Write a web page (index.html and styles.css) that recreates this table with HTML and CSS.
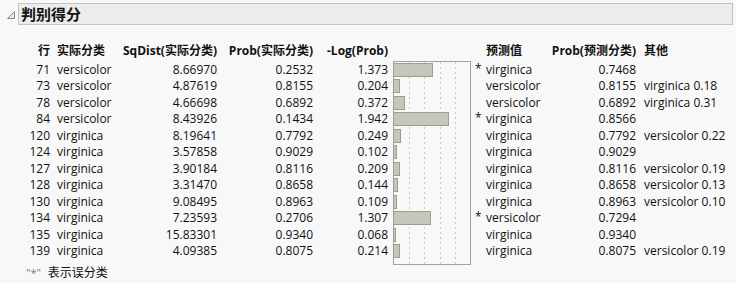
FILE: index.html
```html
<!DOCTYPE html>
<html lang="zh">
<head>
<meta charset="utf-8">
<title>判别得分</title>
<link rel="stylesheet" href="styles.css">
</head>
<body>
<div class="report">
  <div class="outline-header">
    <svg class="disclosure" width="10" height="10" viewBox="0 0 10 10"><polygon points="8.5,1.5 8.5,8.5 1.5,8.5" fill="#e6e6e6" stroke="#8a8a8a" stroke-width="1"/></svg>
    <div class="title-bar"><span class="title">判别得分</span></div>
  </div>

  <div class="score-table">
    <div class="chart">
      <div class="gridline g1"></div><div class="gridline g2"></div><div class="gridline g3"></div><div class="gridline g4"></div>
      <div class="slot"><div class="bar" style="width:40px"></div></div>
      <div class="slot"><div class="bar" style="width:7px"></div></div>
      <div class="slot"><div class="bar" style="width:11.5px"></div></div>
      <div class="slot"><div class="bar" style="width:56px"></div></div>
      <div class="slot"><div class="bar" style="width:8px"></div></div>
      <div class="slot"><div class="bar" style="width:4px"></div></div>
      <div class="slot"><div class="bar" style="width:7px"></div></div>
      <div class="slot"><div class="bar" style="width:5px"></div></div>
      <div class="slot"><div class="bar" style="width:4px"></div></div>
      <div class="slot"><div class="bar" style="width:38px"></div></div>
      <div class="slot"><div class="bar" style="width:3px"></div></div>
      <div class="slot"><div class="bar" style="width:7px"></div></div>
    </div>

    <div class="hd r">行</div><div class="hd l pad">实际分类</div><div class="hd r">SqDist(实际分类)</div><div class="hd r">Prob(实际分类)</div><div class="hd r">-Log(Prob)</div><div class="hd"></div><div class="hd"></div><div class="hd l">预测值</div><div class="hd r">Prob(预测分类)</div><div class="hd l pad2">其他</div>

    <div class="r">71</div><div class="l pad">versicolor</div><div class="r">8.66970</div><div class="r">0.2532</div><div class="r">1.373</div><div class="star">*</div><div class="l">virginica</div><div class="r">0.7468</div><div class="l pad2"></div>
    <div class="r">73</div><div class="l pad">versicolor</div><div class="r">4.87619</div><div class="r">0.8155</div><div class="r">0.204</div><div class="star"></div><div class="l">versicolor</div><div class="r">0.8155</div><div class="l pad2">virginica 0.18</div>
    <div class="r">78</div><div class="l pad">versicolor</div><div class="r">4.66698</div><div class="r">0.6892</div><div class="r">0.372</div><div class="star"></div><div class="l">versicolor</div><div class="r">0.6892</div><div class="l pad2">virginica 0.31</div>
    <div class="r">84</div><div class="l pad">versicolor</div><div class="r">8.43926</div><div class="r">0.1434</div><div class="r">1.942</div><div class="star">*</div><div class="l">virginica</div><div class="r">0.8566</div><div class="l pad2"></div>
    <div class="r">120</div><div class="l pad">virginica</div><div class="r">8.19641</div><div class="r">0.7792</div><div class="r">0.249</div><div class="star"></div><div class="l">virginica</div><div class="r">0.7792</div><div class="l pad2">versicolor 0.22</div>
    <div class="r">124</div><div class="l pad">virginica</div><div class="r">3.57858</div><div class="r">0.9029</div><div class="r">0.102</div><div class="star"></div><div class="l">virginica</div><div class="r">0.9029</div><div class="l pad2"></div>
    <div class="r">127</div><div class="l pad">virginica</div><div class="r">3.90184</div><div class="r">0.8116</div><div class="r">0.209</div><div class="star"></div><div class="l">virginica</div><div class="r">0.8116</div><div class="l pad2">versicolor 0.19</div>
    <div class="r">128</div><div class="l pad">virginica</div><div class="r">3.31470</div><div class="r">0.8658</div><div class="r">0.144</div><div class="star"></div><div class="l">virginica</div><div class="r">0.8658</div><div class="l pad2">versicolor 0.13</div>
    <div class="r">130</div><div class="l pad">virginica</div><div class="r">9.08495</div><div class="r">0.8963</div><div class="r">0.109</div><div class="star"></div><div class="l">virginica</div><div class="r">0.8963</div><div class="l pad2">versicolor 0.10</div>
    <div class="r">134</div><div class="l pad">virginica</div><div class="r">7.23593</div><div class="r">0.2706</div><div class="r">1.307</div><div class="star">*</div><div class="l">versicolor</div><div class="r">0.7294</div><div class="l pad2"></div>
    <div class="r">135</div><div class="l pad">virginica</div><div class="r">15.83301</div><div class="r">0.9340</div><div class="r">0.068</div><div class="star"></div><div class="l">virginica</div><div class="r">0.9340</div><div class="l pad2"></div>
    <div class="r">139</div><div class="l pad">virginica</div><div class="r">4.09385</div><div class="r">0.8075</div><div class="r">0.214</div><div class="star"></div><div class="l">virginica</div><div class="r">0.8075</div><div class="l pad2">versicolor 0.19</div>
  </div>

  <div class="footnote"><span class="quote">"*"</span><span class="note">表示误分类</span></div>
</div>
</body>
</html>
```

FILE: styles.css
```css
html, body {
  margin: 0;
  padding: 0;
  background: #f8f8f8;
}

body {
  font-family: "Open Sans", "Noto Sans CJK SC", sans-serif;
  font-size: 12px;
  color: #111;
}

.report {
  width: 736px;
  height: 283px;
  overflow: hidden;
}

.outline-header {
  display: flex;
  align-items: flex-start;
  padding-top: 3px;
}

.disclosure {
  margin: 7px 2px 0 6px;
  flex: none;
}

.title-bar {
  flex: 1;
  margin-right: 3px;
  height: 20px;
  background: #ececec;
  border: 1px solid #c3c3c3;
  display: flex;
  align-items: center;
  padding-left: 2px;
}

.title {
  font-family: "Noto Sans CJK SC", sans-serif;
  font-weight: bold;
  font-size: 15px;
  line-height: 20px;
}

.score-table {
  display: grid;
  margin: 15px 0 0 20px;
  grid-template-columns: 30px 70px 97px 96px 75px 83px 15px 62px 88px 100px;
  grid-template-rows: 21.5px repeat(12, 16.5px) 5px;
  align-items: center;
  line-height: 16px;
  white-space: nowrap;
}

.hd {
  font-weight: bold;
}

.r { text-align: right; }
.l { text-align: left; }
.pad { padding-left: 7px; }
.pad2 { padding-left: 8px; }

.star {
  padding-left: 4px;
  align-self: start;
  line-height: 14px;
}

.chart {
  grid-column: 6;
  grid-row: 2 / 15;
  align-self: stretch;
  margin: -1px 0 0 5px;
  width: 78px;
  box-sizing: border-box;
  border: 1px solid #a3a39b;
  position: relative;
  display: flex;
  flex-direction: column;
}

.gridline {
  position: absolute;
  top: 0;
  bottom: 0;
  width: 1px;
  background: repeating-linear-gradient(to bottom, #c9c9c9 0 2px, transparent 2px 5px);
}
.g1 { left: 15px; }
.g2 { left: 30px; }
.g3 { left: 46px; }
.g4 { left: 61px; }

.slot {
  height: 16.5px;
  display: flex;
  align-items: center;
  position: relative;
  z-index: 1;
}

.bar {
  height: 14px;
  margin-left: -1px;
  box-sizing: border-box;
  border: 1px solid #9d9d93;
  background: #c6c6bd;
}

.footnote {
  display: flex;
  align-items: center;
  gap: 7px;
  margin: 1px 0 0 26px;
  line-height: 14px;
}

.quote {
  color: #777;
  font-size: 11px;
}
```
